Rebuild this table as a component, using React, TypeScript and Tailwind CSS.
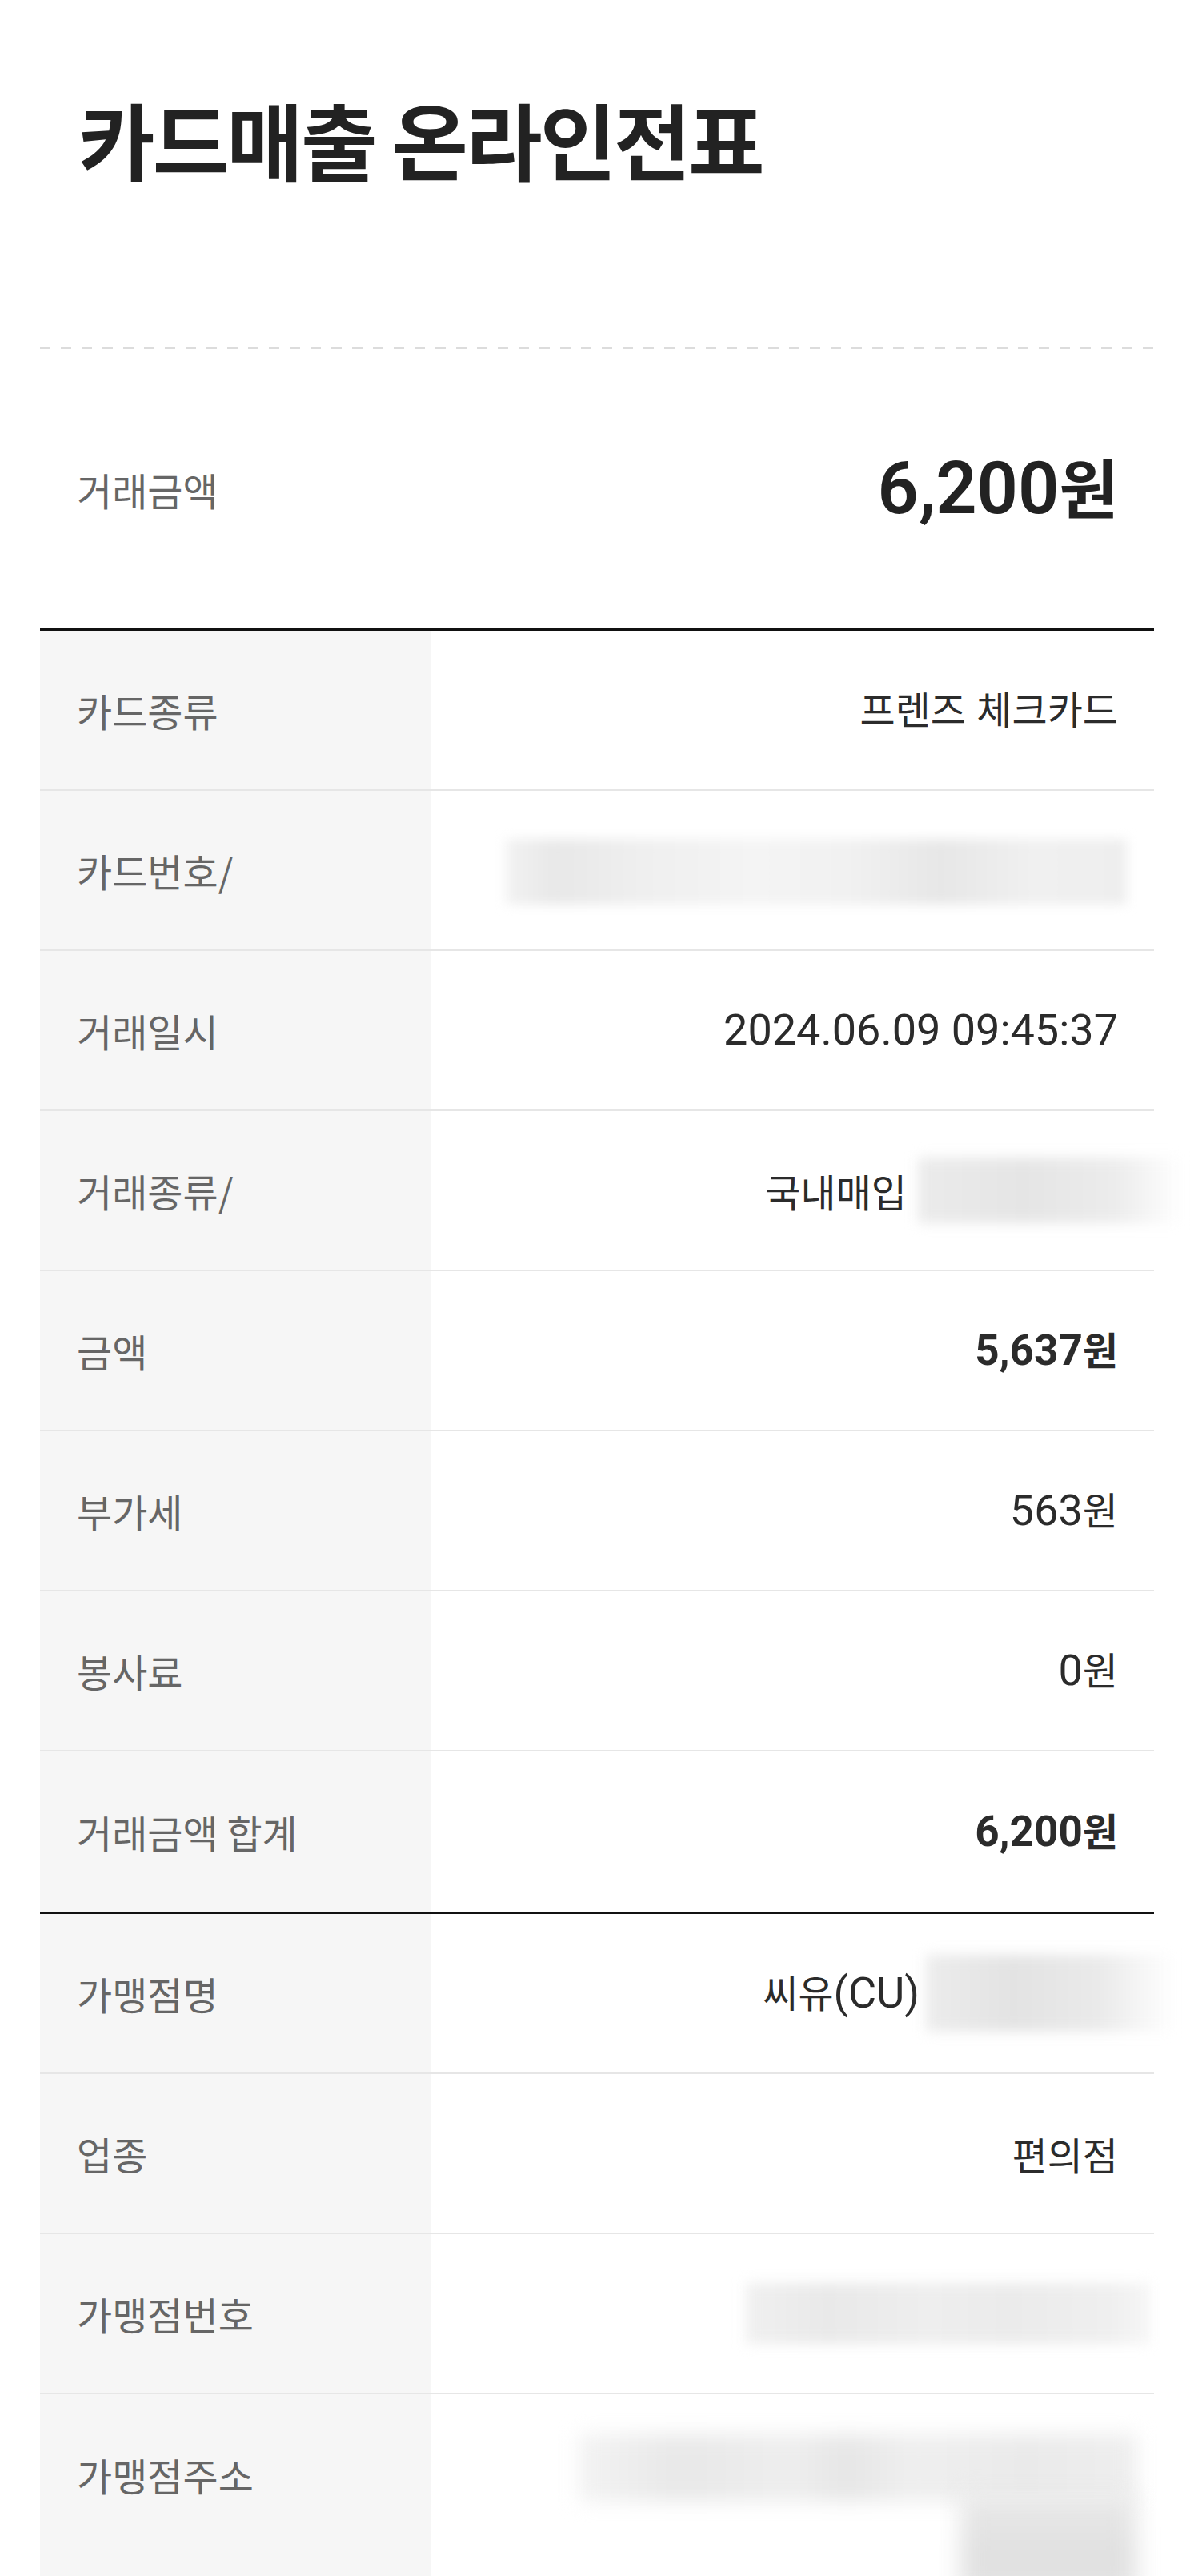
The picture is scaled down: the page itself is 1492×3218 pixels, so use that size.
import React from "react";

const HANGUL_SPLIT = /([\u1100-\u11FF\u3130-\u318F\uAC00-\uD7AF]+)/;
const HANGUL_TEST = /[\u1100-\u11FF\u3130-\u318F\uAC00-\uD7AF]/;

function Mixed({ text, latin, hangul }: { text: string; latin: string; hangul: string }) {
  return (
    <>
      {text
        .split(HANGUL_SPLIT)
        .filter((p) => p.length > 0)
        .map((p, i) => (
          <span key={i} className={HANGUL_TEST.test(p) ? hangul : latin}>
            {p}
          </span>
        ))}
    </>
  );
}

const LATIN_REG = "font-['Roboto',sans-serif] text-[54px] font-normal";
const HANGUL_REG = "font-['Noto_Sans_CJK_KR',sans-serif] text-[48px] font-normal";
const LATIN_BOLD = "font-['Roboto',sans-serif] text-[53px] font-bold";
const HANGUL_BOLD = "font-['Noto_Sans_CJK_KR',sans-serif] text-[48px] font-bold";

function Label({ children }: { children: React.ReactNode }) {
  return (
    <span className="font-['Noto_Sans_CJK_KR',sans-serif] text-[48px] leading-none text-[#666666] whitespace-nowrap">
      {children}
    </span>
  );
}

function Row({
  label,
  children,
  last,
}: {
  label: string;
  children?: React.ReactNode;
  last?: boolean;
}) {
  return (
    <div className={last ? "flex h-[200px]" : "flex h-[200px] border-b-2 border-[#e6e6e6]"}>
      <div className="w-[488px] shrink-0 bg-[#f6f6f6] flex items-center pl-[46px]">
        <Label>{label}</Label>
      </div>
      <div className="flex-1 flex items-center justify-end pr-[45px] leading-none text-[#2b2b2b]">
        {children}
      </div>
    </div>
  );
}

function Val({ text, bold }: { text: string; bold?: boolean }) {
  return (
    <span className="leading-none whitespace-nowrap">
      <Mixed text={text} latin={bold ? LATIN_BOLD : LATIN_REG} hangul={bold ? HANGUL_BOLD : HANGUL_REG} />
    </span>
  );
}

export default function App() {
  return (
    <div className="w-[1492px] h-[3218px] overflow-hidden bg-white font-['Noto_Sans_CJK_KR',sans-serif]">
      <div className="px-[50px]">
        <h1 className="pt-[121px] pl-[48px] text-[104px] leading-none font-bold text-[#222222] tracking-[-3px] whitespace-nowrap">
          카드매출 온라인전표
        </h1>

        <div className="mt-[209px] h-[2px] bg-[repeating-linear-gradient(90deg,#dcdcdc_0px,#dcdcdc_13px,transparent_13px,transparent_26px)]" />

        <section className="h-[349px] flex items-center justify-between pl-[46px] pr-[45px]">
          <Label>거래금액</Label>
          <span className="leading-none whitespace-nowrap text-[#222222]">
            <span className="font-['Roboto',sans-serif] text-[90px] font-semibold">6,200</span>
            <span className="font-['Noto_Sans_CJK_KR',sans-serif] text-[80px] font-bold">원</span>
          </span>
        </section>

        <div className="border-t-[3px] border-[#111111]">
          <Row label="카드종류">
            <Val text="프렌즈 체크카드" />
          </Row>
          <Row label="카드번호/">
            <div className="w-[776px] h-[82px] mr-[-11px] mt-[4px] blur-[7px] bg-[linear-gradient(90deg,#f2f2f2_0%,#e8e8e8_8%,#efefef_22%,#f4f4f4_40%,#f1f1f1_55%,#e7e7e7_70%,#f0f0f0_85%,#eeeeee_100%)]" />
          </Row>
          <Row label="거래일시">
            <Val text="2024.06.09 09:45:37" />
          </Row>
          <Row label="거래종류/">
            <Val text="국내매입" />
            <div className="ml-[14px] w-[330px] h-[82px] mr-[-80px] blur-[8px] bg-[linear-gradient(90deg,#ebebeb_0%,#e5e5e5_40%,#ececec_75%,#ffffff_100%)]" />
          </Row>
          <Row label="금액">
            <Val text="5,637원" bold />
          </Row>
          <Row label="부가세">
            <Val text="563원" />
          </Row>
          <Row label="봉사료">
            <Val text="0원" />
          </Row>
          <Row label="거래금액 합계" last>
            <Val text="6,200원" bold />
          </Row>
        </div>

        <div className="border-t-[3px] border-[#111111]">
          <Row label="가맹점명">
            <Val text="씨유(CU)" />
            <div className="ml-[8px] w-[310px] h-[96px] mr-[-70px] blur-[8px] bg-[linear-gradient(90deg,#ececec_0%,#e3e3e3_35%,#eaeaea_70%,#ffffff_100%)]" />
          </Row>
          <Row label="업종">
            <Val text="편의점" />
          </Row>
          <Row label="가맹점번호">
            <div className="w-[505px] h-[76px] mr-[-40px] blur-[8px] bg-[linear-gradient(90deg,#f0f0f0_0%,#e9e9e9_20%,#eeeeee_45%,#ebebeb_65%,#efefef_90%,#f6f6f6_100%)]" />
          </Row>
          <div className="flex h-[300px]">
            <div className="w-[488px] shrink-0 bg-[#f6f6f6] pt-[76px] pl-[46px]">
              <Label>가맹점주소</Label>
            </div>
            <div className="flex-1 flex flex-col items-end pt-[50px] pr-[22px]">
              <div className="w-[697px] h-[84px] blur-[12px] bg-[linear-gradient(90deg,#f3f3f3_0%,#e8e8e8_18%,#eeeeee_38%,#e6e6e6_48%,#efefef_60%,#eaeaea_80%,#eeeeee_100%)]" />
              <div className="w-[220px] h-[130px] mt-[-10px] blur-[14px] bg-[linear-gradient(180deg,#e9e9e9_0%,#e0e0e0_60%,#e4e4e4_100%)]" />
            </div>
          </div>
        </div>
      </div>
    </div>
  );
}
